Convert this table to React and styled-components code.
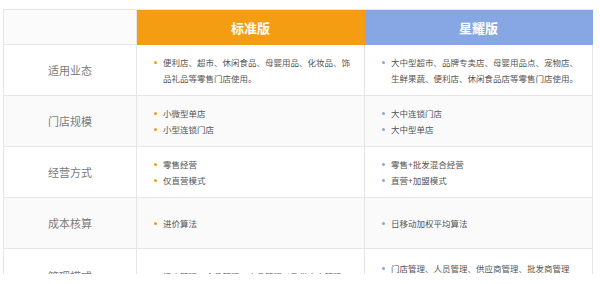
import React from 'react'
import styled, { createGlobalStyle } from 'styled-components'

const GlobalStyle = createGlobalStyle`
  html, body {
    margin: 0;
    padding: 0;
    background: #fff;
  }
  body {
    font-family: "Microsoft YaHei", "Noto Sans CJK SC", "Liberation Sans", sans-serif;
  }
`

const rows = [
  {
    label: '适用业态',
    std: ['便利店、超市、休闲食品、母婴用品、化妆品、饰品礼品等零售门店使用。'],
    star: ['大中型超市、品牌专卖店、母婴用品点、宠物店、生鲜果蔬、便利店、休闲食品店等零售门店使用。'],
  },
  {
    label: '门店规模',
    std: ['小微型单店', '小型连锁门店'],
    star: ['大中连锁门店', '大中型单店'],
  },
  {
    label: '经营方式',
    std: ['零售经营', '仅直营模式'],
    star: ['零售+批发混合经营', '直营+加盟模式'],
  },
  {
    label: '成本核算',
    std: ['进价算法'],
    star: ['日移动加权平均算法'],
  },
  {
    label: '管理模式',
    std: ['门店管理、会员管理、商品管理以及供应商管理'],
    star: ['门店管理、人员管理、供应商管理、批发商管理', '会员管理、商品管理、库存管理'],
  },
]

export default function App() {
  return (
    <>
      <GlobalStyle />
      <Page>
        <Table>
          <HeadCell />
          <HeadCell $tone="#f59d12">标准版</HeadCell>
          <HeadCell $tone="#87a7e4">星耀版</HeadCell>
          {rows.map((row, i) => (
            <React.Fragment key={row.label}>
              <Label $shade={i % 2 === 1}>{row.label}</Label>
              <Cell $shade={i % 2 === 1}>
                <List $dot="#f39c12">
                  {row.std.map(t => <li key={t}>{t}</li>)}
                </List>
              </Cell>
              <Cell $shade={i % 2 === 1}>
                <List $dot="#86a6e0">
                  {row.star.map(t => <li key={t}>{t}</li>)}
                </List>
              </Cell>
            </React.Fragment>
          ))}
        </Table>
      </Page>
    </>
  )
}

const Page = styled.div`
  padding: 9px 0 0 3px;
  height: 265px;
  overflow: hidden;
`

const Table = styled.div`
  display: grid;
  grid-template-columns: 133px 228px 228px;
  grid-template-rows: 35px repeat(4, 51px) 55px;
  width: 590px;
  border-top: 1px solid #e6e6e6;
  border-left: 1px solid #e6e6e6;
`

const HeadCell = styled.div`
  display: flex;
  align-items: center;
  justify-content: center;
  background: ${p => p.$tone || '#fbfbfb'};
  color: #fff;
  font-size: 13px;
  font-weight: bold;
  border-right: 1px solid ${p => p.$tone ? 'transparent' : '#e6e6e6'};
  border-bottom: 1px solid ${p => p.$tone ? p.$tone : '#e6e6e6'};
  &:last-child {
    border-right: 1px solid #e0e0e0;
  }
`

const Label = styled.div`
  display: flex;
  align-items: center;
  justify-content: center;
  font-size: 11px;
  color: #7a7a7a;
  background: ${p => p.$shade ? '#fafafa' : '#fff'};
  border-right: 1px solid #e6e6e6;
  border-bottom: 1px solid #e6e6e6;
`

const Cell = styled.div`
  display: flex;
  align-items: center;
  padding: 0 8px 0 16px;
  background: ${p => p.$shade ? '#fafafa' : '#fff'};
  border-right: 1px solid #e6e6e6;
  border-bottom: 1px solid #e6e6e6;
`

const List = styled.ul`
  margin: 0;
  padding: 0;
  list-style: none;
  font-size: 8.5px;
  line-height: 16.5px;
  color: #555;
  li {
    position: relative;
    padding-left: 10px;
  }
  li::before {
    content: '';
    position: absolute;
    left: 1px;
    top: 7px;
    width: 3px;
    height: 3px;
    border-radius: 50%;
    background: ${p => p.$dot};
  }
`
